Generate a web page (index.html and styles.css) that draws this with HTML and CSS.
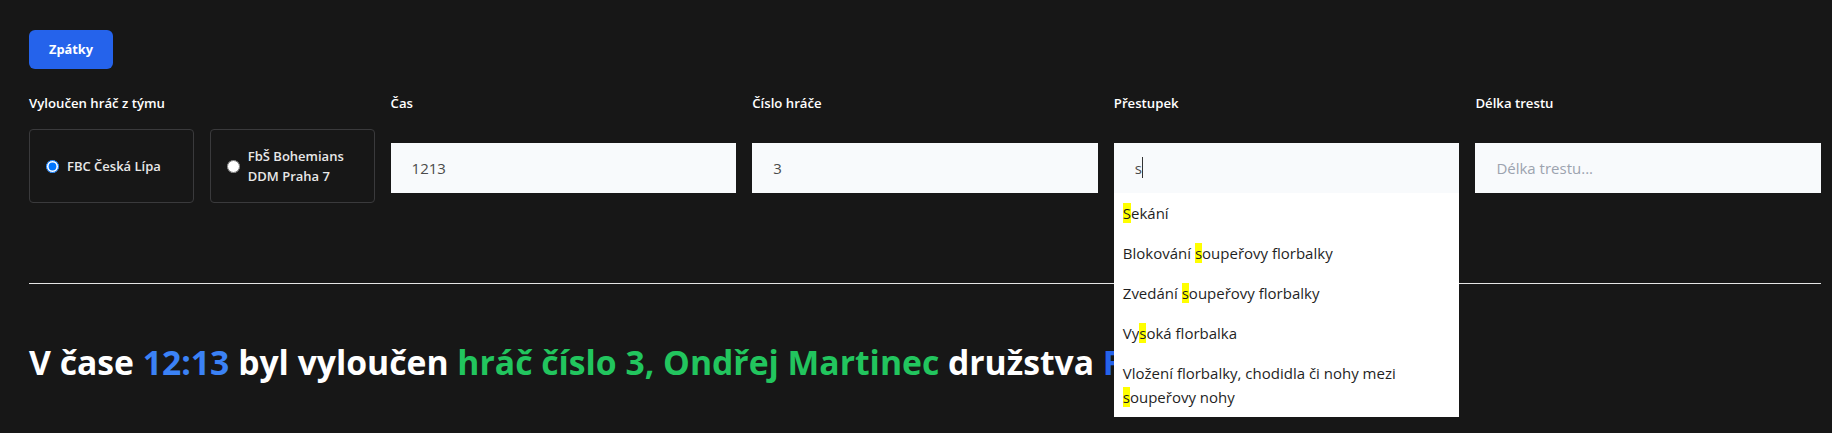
FILE: index.html
```html
<!DOCTYPE html>
<html lang="cs">
<head>
<meta charset="utf-8">
<title>Vyloučení</title>
<link rel="stylesheet" href="styles.css">
</head>
<body>
<main class="page">
  <button type="button" class="btn-back">Zpátky</button>

  <form class="form-grid">
    <div class="field">
      <span class="field-label">Vyloučen hráč z týmu</span>
      <div class="team-options">
        <label class="team-card">
          <input type="radio" name="team" class="team-radio" checked>
          <span class="team-name">FBC Česká Lípa</span>
        </label>
        <label class="team-card">
          <input type="radio" name="team" class="team-radio">
          <span class="team-name">FbŠ Bohemians DDM Praha 7</span>
        </label>
      </div>
    </div>

    <div class="field">
      <label class="field-label" for="cas">Čas</label>
      <div class="control">
        <input id="cas" class="text-input" type="text" value="1213">
      </div>
    </div>

    <div class="field">
      <label class="field-label" for="cislo">Číslo hráče</label>
      <div class="control">
        <input id="cislo" class="text-input" type="text" value="3">
      </div>
    </div>

    <div class="field">
      <label class="field-label" for="prestupek">Přestupek</label>
      <div class="control">
        <input id="prestupek" class="text-input" type="text" value="s">
        <span class="caret" aria-hidden="true"></span>
        <ul class="suggestions">
          <li class="suggestion"><mark class="hl">S</mark>ekání</li>
          <li class="suggestion">Blokování <mark class="hl">s</mark>oupeřovy florbalky</li>
          <li class="suggestion">Zvedání <mark class="hl">s</mark>oupeřovy florbalky</li>
          <li class="suggestion">Vy<mark class="hl">s</mark>oká florbalka</li>
          <li class="suggestion">Vložení florbalky, chodidla či nohy mezi <mark class="hl">s</mark>oupeřovy nohy</li>
        </ul>
      </div>
    </div>

    <div class="field">
      <label class="field-label" for="delka">Délka trestu</label>
      <div class="control">
        <input id="delka" class="text-input" type="text" placeholder="Délka trestu...">
      </div>
    </div>
  </form>

  <hr class="divider">

  <p class="summary">V čase <span class="c-time">12:13</span> byl vyloučen <span class="c-player">hráč číslo 3, Ondřej Martinec</span> družstva <span class="c-team">FbŠ Bohemians</span></p>
</main>
</body>
</html>
```
FILE: styles.css
```css
* { box-sizing: border-box; }

html, body {
  margin: 0;
  background: #171717;
}

body {
  font-family: "Open Sans", "Noto Sans", sans-serif;
  color: #ffffff;
}

.page {
  min-height: 100vh;
  padding: 30px 11px 0 29px;
}

.btn-back {
  display: block;
  border: 0;
  border-radius: 6px;
  background: #2563eb;
  color: #ffffff;
  font-family: inherit;
  font-size: 12.8px;
  font-weight: 700;
  line-height: 19px;
  padding: 10px 20px;
  cursor: pointer;
}

.form-grid {
  margin-top: 24px;
  display: grid;
  grid-template-columns: repeat(5, minmax(0, 1fr));
  column-gap: 16px;
}

.field {
  display: flex;
  flex-direction: column;
}

.field-label {
  font-size: 13.2px;
  font-weight: 600;
  line-height: 20px;
  color: #ffffff;
  margin-bottom: 16px;
}

.team-options {
  display: grid;
  grid-template-columns: 1fr 1fr;
  gap: 16px;
}

.team-card {
  display: flex;
  align-items: center;
  gap: 8px;
  padding: 16px;
  border: 1px solid #3a3a3c;
  border-radius: 4px;
  min-height: 74px;
  cursor: pointer;
}

.team-radio {
  margin: 0;
  width: 13px;
  height: 13px;
  flex: none;
}

.team-name {
  font-size: 13px;
  font-weight: 600;
  line-height: 20px;
  color: #e8e8e8;
}

.control {
  position: relative;
  margin-top: 14px;
}

.text-input {
  display: block;
  width: 100%;
  height: 50px;
  margin: 0;
  padding: 12px 20px;
  border: 1px solid #f8fafc;
  border-radius: 0;
  background: #f8fafc;
  color: #4b4b4b;
  font-family: inherit;
  font-size: 15px;
  line-height: 24px;
  outline: none;
}

.text-input::placeholder {
  color: #9ca3af;
}

.caret {
  position: absolute;
  left: 28px;
  top: 14px;
  width: 1px;
  height: 21px;
  background: #333333;
}

.suggestions {
  position: absolute;
  top: 100%;
  left: 0;
  right: 0;
  z-index: 10;
  margin: 0;
  padding: 0;
  list-style: none;
  background: #ffffff;
}

.suggestion {
  padding: 8px 9px;
  font-size: 15px;
  line-height: 24px;
  color: #1f1f1f;
}

.hl {
  background: #ffff00;
  color: inherit;
}

.divider {
  margin: 80px 0 0;
  border: 0;
  border-top: 1px solid #e5e5e5;
  height: 0;
}

.summary {
  margin: 58px 0 0;
  font-size: 33.7px;
  font-weight: 700;
  line-height: 40px;
  color: #ffffff;
}

.c-time { color: #3b82f6; }
.c-player { color: #22c55e; }
.c-team { color: #2563eb; }
```
